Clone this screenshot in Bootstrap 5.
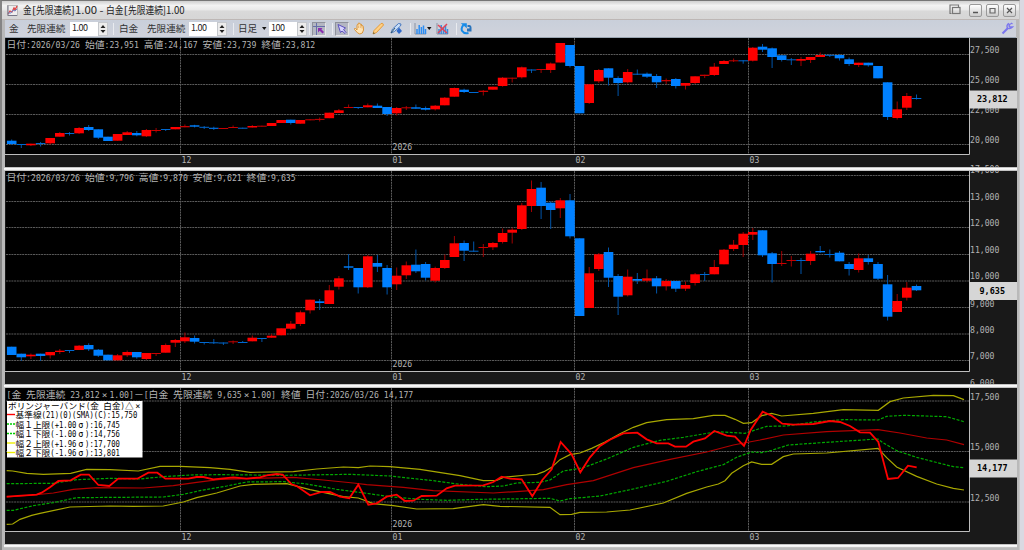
<!DOCTYPE html>
<html lang="ja">
<head>
<meta charset="utf-8">
<meta name="viewport" content="width=device-width, initial-scale=1">
<title>金[先限連続] - 白金[先限連続]</title>
<link href="https://cdn.jsdelivr.net/npm/bootstrap@5.3.0/dist/css/bootstrap.min.css" rel="stylesheet">
<style>
body{width:1024px;height:550px;overflow:hidden;background:#d9d9e2;font-family:"Noto Sans CJK JP","Liberation Sans",sans-serif;font-size:9.6px;line-height:1;color:#333}
.win{width:1020px;height:550px;background:#b9b9b9;border-top:1px solid #777;border-left:2px solid #858585;border-right:1px solid #c6c6c6;padding:0 3px 0 3px}
.titlebar{height:19px;flex:none;background:linear-gradient(#d0d0d0,#f3f3f3 25%,#e9e9e9 50%,#d9d9d9 55%,#d6d6d6);margin:0 -3px;padding:0 3px 0 5px;border-bottom:1px solid #bdb7b5}
.titlebar svg,.tools svg{display:block;flex:none}
.wbtn{width:13px;height:13px;border:1px solid #999;border-radius:2px;background:linear-gradient(#fff,#ccc)}
.tools{height:18px;flex:none;display:grid;grid-template-columns:18px 43px 43px 6px 28px 42px 44px 5px 24px 7px 40px 3px 20px 3px 18px 19px 18px 20px 4px 13px 9px 20px 4px 14px 1fr 15px;align-items:center;padding-left:4px;background:linear-gradient(#c9cfda,#d0d3dc);border-bottom:1px solid #9aa5b1;white-space:nowrap}
.spin{width:38px;height:14px;background:#fff}
.spin span{width:28px;padding-left:2px;line-height:12px;font-size:9px;letter-spacing:-.5px;color:#222}
.spin b{width:10px;height:14px;background:#ececec;border:1px solid #c5c8cc}
.bar{width:1px;height:12px;background:#e9ebef}
.held{width:14px;height:14px;background:#b4b7c2;border:1px solid #8f929b;border-right-color:#e5e5e5;border-bottom-color:#e5e5e5}
.pane{display:block;flex:none;background:#191919;width:1012px}
.split{height:4px;flex:none;background:linear-gradient(#aaa,#fff 40%,#f0f0f0 65%,#a9a9a9);margin:0 -1px}
.grid-line{stroke:#5a5a5a;stroke-width:1;stroke-dasharray:2 .7}
.edge{stroke:#bdbdbd;fill:none;stroke-width:1}
.mono-txt{font-family:"DejaVu Sans Mono","Noto Sans CJK JP",monospace;font-size:9.5px;fill:#b4b4b4}
.kanji{font-family:"Noto Sans CJK JP",sans-serif;font-size:9.6px}
.legend-txt{fill:#000;font-size:8.5px}
.tag-txt{fill:#000;font-weight:bold}
.caption-txt{fill:#222;font-family:"Noto Sans CJK JP",sans-serif;font-size:10px}
.line{fill:none;vector-effect:non-scaling-stroke}
</style>
</head>
<body>
<div class="win d-flex flex-column">
  <div class="titlebar d-flex align-items-center">
    <svg width="11" height="11" viewBox="0 0 11 11"><rect x=".5" y=".5" width="10" height="10" fill="#eee" stroke="#bbb"/><path d="M1 9L3 6L5 7L7 3L8 5L10 1" fill="none" stroke="#e04444" stroke-width="1.3"/><path d="M1 8L4 8L6 5L8 6L10 4" fill="none" stroke="#7183c5"/><path d="M1 .5V10.5H10" stroke="#778" fill="none"/></svg>
    <svg width="170" height="16" class="ms-1" id="caption"></svg>
    <svg class="ms-auto" width="12" height="12" viewBox="0 0 12 12" fill="none" stroke="#777" stroke-width="1.2"><path d="M2.5 9.5H1V1H9.500V3"/><rect x="3.500" y="3.500" width="7.500" height="6"/></svg>
    <div class="wbtn ms-2"><svg width="11" height="11"><path d="M3 7.500H8" stroke="#555" stroke-width="1.500"/></svg></div>
    <div class="wbtn ms-1"><svg width="11" height="11"><path d="M3 3.500H8V8H3Z" fill="none" stroke="#666" stroke-width="1.200"/></svg></div>
    <div class="wbtn ms-1"><svg width="11" height="11"><path d="M3 3L8 8M8 3L3 8" stroke="#555" stroke-width="1.200"/></svg></div>
  </div>
  <div class="tools">
    <span>金</span><span>先限連続</span>
    <div class="spin d-flex"><span>1.00</span><b><svg width="8" height="12"><path d="M4 2L6.500 5H1.500ZM4 10L6.500 7H1.500Z" fill="#222"/></svg></b></div>
    <i class="bar"></i><span>白金</span><span>先限連続</span>
    <div class="spin d-flex"><span>1.00</span><b><svg width="8" height="12"><path d="M4 2L6.500 5H1.500ZM4 10L6.500 7H1.500Z" fill="#222"/></svg></b></div>
    <i class="bar"></i><span>日足</span>
    <svg width="5" height="4"><path d="M0 0H4.500L2.250 3Z" fill="#111"/></svg>
    <div class="spin d-flex"><span>100</span><b><svg width="8" height="12"><path d="M4 2L6.500 5H1.500ZM4 10L6.500 7H1.500Z" fill="#222"/></svg></b></div>
    <i class="bar"></i>
    <div class="held"><svg width="12" height="12"><path d="M3.500 0V12M0 3.500H12" stroke="#6670a8"/><path d="M5 5H9.500L8.300 6.300L11 9L9.500 10.500L6.700 7.800L5 9.500Z" fill="#8a2fb0"/></svg></div>
    <i class="bar"></i>
    <div class="held"><svg width="12" height="12"><path d="M2 1.500L9.500 5L7.500 6.500L10 9.500L9 10.500L6 8L4.500 9.500Z" fill="#d8d4ff" stroke="#5b50bd"/></svg></div>
    <svg width="13" height="13" viewBox="0 0 13 13"><path d="M4 8V3.500Q4 2 5 3V1.700Q6 0 7 1.700V2.300Q8.300 1.300 8.700 3V4Q10 3 10.300 4.500L10.500 8Q10 12 6.800 12Q5 12 1.500 7.500Q1 6 2.500 6.500Z" fill="#ffe4b5" stroke="#d8953d"/><path d="M5.500 3.500V6M7.300 3V6M9 4V6.500" stroke="#dfa45a" stroke-width=".7"/></svg>
    <svg width="13" height="13" viewBox="0 0 13 13"><path d="M1 12L2 8.500L9 1.500Q11 .5 11.500 3L4.500 10.500Z" fill="#ffd083" stroke="#e49b3c"/><path d="M1 12L1.500 10L3 11.500Z" fill="#664"/></svg>
    <svg width="13" height="13" viewBox="0 0 13 13"><path d="M1 11L2.500 7L8.500 1.500L11 2L10.500 4L4.500 9.500Z" fill="#c5dcf8" stroke="#4a79bf"/><path d="M1 11L5 6" stroke="#356"/><path d="M9 5.500L12 9L9 12L6.500 9Z" fill="#2e68c9"/></svg>
    <i class="bar"></i>
    <svg width="13" height="12" viewBox="0 0 13 12"><path d="M1 0V11H12" stroke="#8a93a3" fill="none"/><path d="M3 6V11M5.200 2V11M7.400 4V11M9.500 2.500V11M11.500 6V11" stroke="#2c8df2" stroke-width="1.500"/></svg>
    <svg width="5" height="4"><path d="M0 0H4.500L2.250 3Z" fill="#111"/></svg>
    <svg width="13" height="12" viewBox="0 0 13 12"><path d="M1 0V11H12" stroke="#8a93a3" fill="none"/><path d="M3 6V11M5.200 2V11M7.400 4V11M9.500 2.500V11M11.500 6V11" stroke="#3989da" stroke-width="1.500"/><path d="M2 2L11 10M11 1L2 10" stroke="#e34357" stroke-width="1.500"/></svg>
    <i class="bar"></i>
    <svg width="13" height="13" viewBox="0 0 13 13"><path d="M3.500 3Q.8 5.500 2 8.800Q4.200 12.300 8.500 11" fill="none" stroke="#168be8" stroke-width="2"/><path d="M.8 1.200H6.800V6.200Z" fill="#168be8"/><path d="M7.500 3H9.500Q11.500 3 11.500 5.500V9.500H7V6.500H9.500V5H7.500Z" fill="#2873bb"/></svg>
    <span></span>
    <svg width="13" height="13" viewBox="0 0 13 13"><path d="M1.500 11.500L7 6" stroke="#7b76ee" stroke-width="2.200"/><path d="M8 1.500Q5 3 6.500 6Q9 7.500 11.500 5L9 5L8 4L9.500 1.500M10 1L11.500 2" fill="none" stroke="#7b76ee" stroke-width="1.400"/></svg>
  </div>
  <svg class="pane" id="gold" height="129" viewBox="5 38 1012 129"></svg>
  <div class="split"></div>
  <svg class="pane" id="platinum" height="213" viewBox="5 171 1012 213"></svg>
  <div class="split"></div>
  <svg class="pane" id="spread" height="156" viewBox="5 388 1012 156"></svg>
  <div class="split"></div>
</div>
<script src="https://cdn.jsdelivr.net/npm/bootstrap@5.3.0/dist/js/bootstrap.bundle.min.js"></script>
<script>
const months = [[180.5,'12'],[391.5,'01'],[574.5,'02'],[748.5,'03']];
// half-width cells are u px wide, full-width cells 2u; narrow symbols are centred in a full cell
const isWide = c => c.charCodeAt(0)>255||c==='×';
const cells = s => [...s].reduce((n,c)=>n+(isWide(c)?2:1),0);
function label(x,y,s,u=4.9,cls=''){
  let out='',cx=x;
  for(const run of s.match(/[×σ]|[\x00-\xd6\xd8-\xff]+|[^\x00-\xffσ]+/g)){
    const w=cells(run)*u, wide=isWide(run[0]);
    if(run==='×'||run==='σ') out+=`<text x="${(cx+u).toFixed(1)}" y="${y}" text-anchor="middle" class="mono-txt ${cls}">${run}</text>`;
    else out+=`<text xml:space="preserve" x="${cx.toFixed(1)}" y="${y}" class="mono-txt ${wide?'kanji':''} ${cls}" textLength="${w.toFixed(1)}" lengthAdjust="spacingAndGlyphs">${run}</text>`;
    cx+=w;
  }
  return out;
}
function frame(top,bottom,rows,ticks){
  let s=`<rect x="6" y="${top}" width="963" height="${bottom-top}" fill="#000"/>`;
  rows.forEach(y=>s+=`<path class="grid-line" d="M6 ${y}H969"/>`);
  months.forEach(([x])=>s+=`<path class="grid-line" d="M${x} ${top}V${bottom}"/>`);
  s+=`<path class="edge" d="M5 ${bottom+.5}H969.500V${top}"/>`;
  months.forEach(([x,m])=>s+=label(x+1,bottom+8.5,m));
  s+=label(392.5,bottom-4,'2026');
  ticks.forEach(([y,t])=>s+=label(970,y,t));
  return s;
}
const tag=(y,t)=>`<rect x="969" y="${y}" width="48" height="18" fill="#d6d6d6"/>`+label(977+(6-t.length)*2.5,y+11.5,t,5.1,'tag-txt');
// each row: direction, body top, body bottom, wick top, wick bottom
function candles(data){
  return data.trim().split(/\s*;\s*/).filter(Boolean).map((row,i)=>{
    const p=row.split(' '),up=p[0]==='u',[a,b]=[+p[1],+p[2]];
    const hi=p[3]&&p[3]!=='-'?+p[3]:a, lo=p[4]?+p[4]:b, c=11.7+9.625*i;
    const [wick,edge,fill]=up?['#a00000','#c80000','#ff0000']:['#0055aa','#0068d0','#0080ff'];
    const thin=b-a<1.3;
    return `<path d="M${c.toFixed(1)} ${hi}V${lo}" stroke="${wick}"/>`+
      `<rect x="${(c-4.8).toFixed(1)}" y="${a}" width="9.600" height="${Math.max(1,b-a)}" fill="${thin?edge:fill}"/>`;
  }).join('');
}
const goldData=`d 140.7 144 139.5 145;d 144 145 - 148;u 143.7 145.3 - 146;d 143 143.8 142 146.5;u 138 143.3 - 144.5;u 133 136.7 132;d 133 133.8 132 135.5;u 128 133.3 127 134;d 127 130 125 131;d 129.3 137.7 - 139;
d 136.7 141;u 134 140.7;u 132.3 135 131;d 133 135.3 131 136.3;u 130 136.3 129 137;u 130 130.8 128 132.5;d 129 130 - 131;u 127 129.3;u 126 127.3 124.5;d 125.3 126.7 124.8 127.5;
d 126.8 127.6 126 129;d 127.7 129 126.7 130;u 128 128.8;u 127 127.8 125.5;d 127.7 128.5;u 126 127.5 125;u 125.7 126.5;u 123 126;u 120 123;d 119.7 123 - 124.5;
u 120 123.7;u 119.3 120.3;u 118.9 119.7 117.5 121.5;u 112.7 118.2;u 110.3 113 109;u 107 107.8 104.5;d 107 107.8 - 109;u 105.3 107.3 103.5;d 105.7 108 103.5;d 107 114 - 116;
u 108 113.3 107 115.5;u 107.3 108 106 110;d 107.3 108.7 104.5;d 108 109.7 106.5 110.5;u 105.7 109.3 105 110.5;u 97.7 105.3 97;u 88 96.7 87.5;d 89.7 92 88.7 93;d 92 92.8;u 90.7 92 90 95.5;
u 86.7 89.7;u 77.7 86 77 86.7;u 77.7 78.7 - 82.5;u 67.3 77.3 66.5 78.5;d 69.5 70.5 - 73;u 69 70 - 73;u 63.5 70 62.5 73;u 43 62.5;d 45 66 - 67.5;d 66 113.3;
u 84.3 103 - 104;u 70 81.3 69 83;d 68.3 77.7 - 85.5;d 78 83 76.3 96;u 72 82.3 69 83.5;d 73.7 74.5 69.5 75;d 73.7 76.7 72.5 78;d 76 82.3 74 88;u 80 81.3 78.5 84;d 79 86 78 88.5;
u 83 85.7 - 89.5;u 76.3 83 - 84;u 74.7 76 - 78;u 66.7 75 63 76;u 61 64 60;u 60.3 61.2 58.5 62;d 60.3 61.2 - 63.7;u 47.7 60.7 47 61.5;d 46.7 49.7 44 52;d 48.3 57 47.5 68;
d 55.3 60 - 61.5;d 59.3 60 58 65;u 59 60.7 57 66;u 57 60 - 63;u 55 57 52.5;d 54.8 55.5 - 57;d 55 58.3 54 60.5;d 59.3 64 57.5 66;u 62.7 65 - 67;d 62.7 65.3 - 66.7;
d 66 78.3;d 82.3 117 - 120;u 109.3 118 101.5 119.5;u 96 107.7 93 110;d 98 99 94.5 99.5`;
const platinumData=`d 346.7 355;d 353.7 357.3 - 361;u 354.7 356.3 353.5 359;d 353.7 356 - 361;u 352 355.3 - 358.5;u 350.7 352 349 354;d 350 350.8 - 353;u 345.7 350 345;d 345 349.3 343.3 351;d 349.7 355.7 349 357;
d 354.7 360.3;u 355.3 360.3 354;u 352 355.3 350.5 357;d 352 357.3 - 358.7;u 353 359 - 360;u 353 353.8 - 356;u 345 352.7 343.5;u 340 342.7 339 347;u 337.3 341.3 332.5 343;d 338 341.7 335.5 343.5;
d 342 342.8 - 344.5;d 342.3 343 339 344;d 342.5 343.3 - 345;u 341.3 342.3 340.5 344;d 342 342.8 341;u 337.7 341.3 335.5;d 338 338.8 - 342;u 335.7 337.7 334;u 328.3 335.3;u 323.7 328.7 321 330;
u 312.3 324 310.5 326;u 299.7 310.3 - 313.5;d 301.3 303 299 310;u 290.3 304 285;u 278.3 286.7 276 289.5;d 266.3 267.7 254 270;d 268 287.3 - 293.5;u 256.3 287.3 255 288;d 263 266.7 255 272;d 268 287.3 265 294.5;
u 275.7 284.3 267.5 290;u 265.3 275.3 261.5 279;d 264.7 271.3 249.5 273;d 264 277.7 262 280.5;u 268 280.7 266.7 282.5;u 260 268 254.5 269;u 243.3 257 236;d 243 250.7 240.5 261;d 250.7 251.7 241.5;u 247 247.8 244 257;
u 243 247.3 242 250;u 233 242 228.5 243.5;u 229.7 232.7 227.5 243.5;u 205.3 229 203 230;u 189 206 180.5 212;d 187.7 206 182 219;d 202.7 210 201.5 229;u 200.3 208.3 198 218;d 200.3 236.3 194 238.5;d 238.3 316;
u 273.3 308 267;u 254.3 269 253 271;d 252 277.7 247.5 287;d 276 296.7 274 315;u 276.7 295.3 269.5 296.5;d 279 280.7 273 284;u 278.3 280.7 269.5 282.5;d 278.3 286.3 276 293.5;u 281 286.3 279 290.5;d 281 288.7 - 292;
u 285 288.7 281.5 291;u 274.3 283 273 285.5;d 274 274.8 272 281;u 267 274.3 260;u 249.7 264.3 249;u 244.7 249 240 251;u 233.7 245 232 257;u 232 234.7 228 240;d 230.3 255.3 - 257;d 253.3 264 252 282.5;
u 263 263.8 251 266;u 260 260.8 256 266.5;d 260 260.8 258 274;u 253.7 261 251 265;d 251 252.3 246 253;d 254 254.8 249.5 257.5;d 252.7 261.3 251;d 264 269 262 275.5;u 258.3 270 253.5 272.5;d 258.3 262 255 264.5;
d 264 278.7 262 280;d 284.3 316.7 275 320.5;u 301 312 294;u 287.7 297.7 282 300.5;d 286 290.3 284.5 291`;

document.getElementById('caption').innerHTML=label(1,12,'金[先限連続]1.00 - 白金[先限連続]1.00',4.37,'caption-txt');
document.getElementById('gold').innerHTML=
  frame(38,154,[54.5,84.5,114.5,144.5],[[53,'27,500'],[82.5,'25,000'],[113,'22,000'],[142.5,'20,000'],[172,'17,500']])
  +candles(goldData)+label(6.5,47.5,'日付:2026/03/26 始値:23,951 高値:24,167 安値:23,739 終値:23,812')+tag(90.5,'23,812');
document.getElementById('platinum').innerHTML=
  frame(171,371,[175.5,201.5,227.5,254.5,281,307.5,334,360.5],[[172.5,'14,000'],[199.5,'13,000'],[225.5,'12,000'],[252.5,'11,000'],[278.5,'10,000'],[306.5,'9,000'],[332.5,'8,000'],[358.5,'7,000'],[385.5,'6,000']])
  +candles(platinumData)+label(6.5,181,'日付:2026/03/26 始値:9,796 高値:9,870 安値:9,621 終値:9,635')+tag(282,'9,635');

// spread series, on a canvas three times finer than the pane
const series=[
 ['#a8a800',1.2,'','20,272 38,273 80,280 130,283 212,280 260,268 330,269 415,273 480,259 540,259 630,263 690,268 750,277 880,275 950,267 1030,261 1075,263 1110,258 1170,260 1260,268 1380,287 1450,302 1490,301 1510,292 1580,285 1610,283 1632,275 1655,262 1680,239 1710,224 1740,219 1775,205 1815,186 1860,161 1900,142 1940,128 2000,119 2080,116 2140,106 2175,106 2205,118 2230,130 2255,128 2285,107 2315,100 2345,108 2440,100 2530,89 2635,91 2670,65 2710,54 2800,46 2860,47 2892,59'],
 ['#a8a800',1.2,'','20,433 38,432 60,418 95,406 120,400 210,381 330,378 400,379 490,378 550,366 590,353 650,339 720,318 760,313 860,311 930,329 1030,350 1075,354 1120,371 1180,377 1250,387 1360,386 1450,374 1500,379 1650,382 1680,404 1715,403 1740,397 1820,396 1890,390 1990,369 2060,340 2120,321 2155,312 2175,302 2195,280 2230,257 2255,246 2285,253 2315,253 2350,230 2380,222 2480,219 2634,205 2660,233 2690,261 2750,289 2810,312 2860,325 2892,330'],
 ['#00a800',1.2,'3 1.5','20,311 160,310 230,299 330,295 420,297 490,290 570,285 660,284 850,286 1050,283 1170,288 1300,302 1380,313 1460,320 1510,318 1550,309 1620,307 1650,300 1690,273 1750,263 1820,237 1900,202 1980,181 2050,172 2150,155 2235,160 2300,139 2360,138 2440,126 2530,119 2635,120 2660,109 2715,106 2840,110 2892,125'],
 ['#00a800',1.2,'3 1.5','20,391 40,391 100,377 160,368 230,353 490,351 550,343 600,332 680,318 740,306 850,305 920,312 1010,328 1100,340 1170,350 1260,358 1340,361 1440,358 1650,355 1680,363 1710,356 1800,348 1900,327 2000,304 2090,275 2170,254 2210,232 2255,216 2285,218 2315,211 2365,195 2480,187 2634,177 2650,189 2690,212 2750,232 2800,245 2860,260 2892,263'],
 ['#b00000',1.2,'','20,351 100,345 160,339 220,328 290,323 430,324 520,317 590,307 660,298 880,292 970,300 1060,309 1100,314 1210,322 1300,332 1480,339 1560,334 1630,329 1700,314 1780,302 1900,263 2010,238 2120,216 2200,195 2280,180 2350,165 2480,155 2634,149 2700,159 2780,174 2840,180 2892,194'],
 ['#ff0000',1.8,'','20,350 110,344 125,338 150,322 175,303 212,301 242,284 267,284 295,315 328,318 355,296 412,296 445,278 472,278 496,296 565,296 590,291 610,291 640,298 700,292 740,296 780,292 800,286 830,282 848,284 875,313 890,318 930,346 965,336 990,336 1020,350 1048,355 1075,314 1105,374 1130,370 1160,350 1190,344 1215,363 1240,362 1265,348 1310,347 1340,325 1365,317 1450,316 1480,306 1505,290 1530,296 1565,298 1597,349 1627,300 1655,268 1682,186 1715,223 1741,277 1770,232 1800,198 1830,179 1870,160 1912,158 1940,178 1970,190 2005,190 2025,200 2058,200 2080,185 2115,175 2143,153 2180,167 2205,170 2232,198 2252,150 2288,95 2315,107 2347,131 2380,134 2440,132 2490,123 2520,126 2550,138 2580,157 2610,158 2635,186 2664,297 2694,294 2724,257 2750,262']
];
let lower=frame(388,531,[401,451.5,502],[[399.5,'17,500'],[450,'15,000'],[500.5,'12,500'],[551,'10,000']]);
series.forEach(([c,w,dash,p])=>lower+=`<polyline class="line" transform="translate(0 380) scale(.33333)" points="${p}" stroke="${c}" stroke-width="${w}" stroke-dasharray="${dash||'none'}"/>`);
lower+=label(6.5,398,'[金 先限連続 23,812×1.00]－[白金 先限連続 9,635×1.00] 終値 日付:2026/03/26 14,177');
lower+='<rect x="7" y="401" width="135.5" height="56.5" fill="#fff"/>';
lower+=label(8,408.5,'ボリンジャーバンド(金 白金)△×',4.33,'legend-txt');
[['基準線(21)(0)(SMA)(C):15,750','#f00','none'],['幅１上限(+1.00σ):16,745','#0c0','2 1'],['幅１下限(-1.00σ):14,756','#0c0','2 1'],['幅２上限(+1.96σ):17,700','#ee0','none'],['幅２下限(-1.96σ):13,801','#ee0','none']]
 .forEach(([t,c,d],i)=>{const y=414.5+i*9.5;lower+=`<path d="M7 ${y}H15" stroke="${c}" stroke-width="1.4" stroke-dasharray="${d}"/>`+label(15.5,y+3.5,t,4.35,'legend-txt')});
document.getElementById('spread').innerHTML=lower+tag(459.5,'14,177');
</script>
</body>
</html>
